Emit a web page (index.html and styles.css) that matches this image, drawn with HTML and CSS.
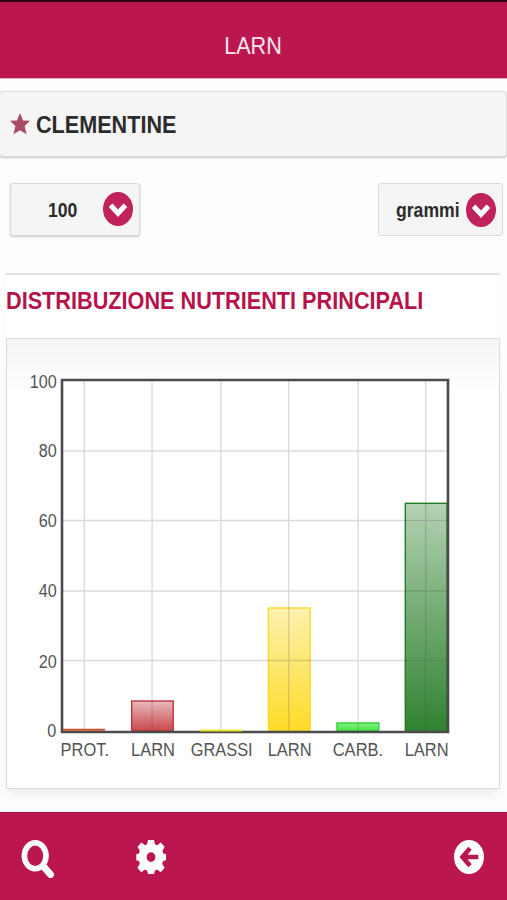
FILE: index.html
```html
<!DOCTYPE html>
<html lang="it">
<head>
<meta charset="utf-8">
<title>LARN</title>
<link rel="stylesheet" href="styles.css">
</head>
<body>
<header class="topbar"><h1 class="cond">LARN</h1></header>
<main>
  <section class="food">
    <svg class="star" viewBox="0 0 20 22"><path d="M10 0l3 7.4 7 .4-5.4 5.3 1.9 8.2L10 17.2l-6.5 4.1 1.9-8.2L0 7.8l7-.4z"/></svg>
    <h2 class="cond">CLEMENTINE</h2>
  </section>
  <div class="controls">
    <button class="select amount"><span class="cond">100</span>
      <svg class="chev" viewBox="0 0 30 34"><ellipse cx="15" cy="17" rx="15" ry="17"/><path d="M7.6 13.3l7.4 8 7.4-8"/></svg>
    </button>
    <button class="select unit"><span class="cond">grammi</span>
      <svg class="chev" viewBox="0 0 30 34"><ellipse cx="15" cy="17" rx="15" ry="17"/><path d="M7.6 13.3l7.4 8 7.4-8"/></svg>
    </button>
  </div>
  <section class="report">
    <h3 class="cond">DISTRIBUZIONE NUTRIENTI PRINCIPALI</h3>
    <div class="panel">
      <svg class="chart" viewBox="7 339 492 449">
        <defs>
          <linearGradient id="red" x2="0" y2="1"><stop stop-color="#e9babd"/><stop offset="1" stop-color="#c9484c"/></linearGradient>
          <linearGradient id="gold" x2="0" y2="1"><stop stop-color="#fdf2b0"/><stop offset="1" stop-color="#ffdb27"/></linearGradient>
          <linearGradient id="lime" x2="0" y2="1"><stop stop-color="#88f088"/><stop offset="1" stop-color="#45e645"/></linearGradient>
          <linearGradient id="green" x2="0" y2="1"><stop stop-color="#b3d2b3"/><stop offset="1" stop-color="#308230"/></linearGradient>
        </defs>
        <rect x="62" y="380" width="386" height="352" fill="#fff"/>
        <rect x="131.7" y="701" width="41.5" height="30" fill="url(#red)" stroke="#c0343c" stroke-width="1.4"/>
        <rect x="268.4" y="608" width="41.8" height="123" fill="url(#gold)" stroke="#fbd929" stroke-width="1.4"/>
        <rect x="337" y="723" width="41.8" height="8" fill="url(#lime)" stroke="#2fce36" stroke-width="1.4"/>
        <rect x="405.3" y="503.3" width="41.8" height="228" fill="url(#green)" stroke="#247b28" stroke-width="1.4"/>
        <path class="grid" d="M84.2 381v349M152.1 381v349M220.9 381v349M288.8 381v349M358.1 381v349M425.7 381v349M63 451h384M63 520.5h384M63 591h384M63 660.5h384"/>
        <path class="frame" d="M62 380h386v352H62z"/>
        <path d="M63 729.8h42" stroke="#c9502c" stroke-width="2"/>
        <path d="M200 730.4h42" stroke="#e9e52d" stroke-width="2"/>
        <g class="tick">
          <text x="29.8" y="387.5" textLength="27" lengthAdjust="spacingAndGlyphs">100</text>
          <text x="38.8" y="457" textLength="18" lengthAdjust="spacingAndGlyphs">80</text>
          <text x="38.8" y="527.3" textLength="18" lengthAdjust="spacingAndGlyphs">60</text>
          <text x="38.8" y="597" textLength="18" lengthAdjust="spacingAndGlyphs">40</text>
          <text x="38.8" y="667.5" textLength="18" lengthAdjust="spacingAndGlyphs">20</text>
          <text x="47.3" y="737.2" textLength="9" lengthAdjust="spacingAndGlyphs">0</text>
          <text x="60.6" y="756.3" textLength="48.5" lengthAdjust="spacingAndGlyphs">PROT.</text>
          <text x="131" y="756.3" textLength="44" lengthAdjust="spacingAndGlyphs">LARN</text>
          <text x="190.7" y="756.3" textLength="62" lengthAdjust="spacingAndGlyphs">GRASSI</text>
          <text x="267.7" y="756.3" textLength="44" lengthAdjust="spacingAndGlyphs">LARN</text>
          <text x="332.7" y="756.3" textLength="50.5" lengthAdjust="spacingAndGlyphs">CARB.</text>
          <text x="404.7" y="756.3" textLength="44" lengthAdjust="spacingAndGlyphs">LARN</text>
        </g>
      </svg>
    </div>
  </section>
</main>
<footer class="toolbar">
  <svg class="search" viewBox="0 0 33 38"><ellipse cx="14.2" cy="15.8" rx="10.8" ry="13"/><path d="M22.5 26.5l7 8"/></svg>
  <svg class="gear" viewBox="0 0 30 34"><path fill-rule="evenodd" d="M12 0h6l.9 4.2 2.1 1 3.8-2.8 3.8 4.4-2.2 4.2.8 2.4 2.8.8v6l-2.9.9-.9 2.6 2.4 4-3.9 4.5-3.6-2.8-2.2 1-.9 3.6h-6l-.9-3.6-2.2-1-3.6 2.8-3.9-4.5 2.4-4-.8-2.6-2.7-.9v-6l2.7-.8.8-2.4-2.2-4.2 3.8-4.4L9 5.2l2.1-1zM15 12.2a4.4 4.9 0 1 0 0 9.8 4.4 4.9 0 1 0 0-9.8z"/></svg>
  <svg class="back" viewBox="0 0 30 34"><ellipse cx="15" cy="17" rx="15" ry="17"/><path d="M24.3 17H9M16 8.2L8.5 17l7.5 8.8"/></svg>
</footer>
</body>
</html>
```
FILE: styles.css
```css
* { box-sizing: border-box; }
body {
  margin: 0;
  height: 900px;
  display: flex;
  flex-direction: column;
  overflow: hidden;
  background: #fdfdfd;
  font-family: "Liberation Sans", Arial, sans-serif;
  color: #2b2b2b;
}
h1, h2, h3 { margin: 0; white-space: nowrap; }
svg { display: block; flex: none; }
.cond { display: inline-block; transform: scaleX(.9); transform-origin: 0 50%; }
.topbar {
  height: 79px;
  padding-top: 12px;
  display: flex;
  align-items: center;
  justify-content: center;
  background: #bb164f;
  border-top: 2px solid #2b0415;
  border-bottom: 1px solid #eda9c1;
}
.topbar h1 {
  font-size: 24px;
  font-weight: 400;
  line-height: 28px;
  color: #fce6ee;
  transform-origin: 50% 50%;
}
main { flex: 1; padding-top: 12px; }
.food {
  height: 66px;
  width: 508px;
  margin-left: -1px;
  padding-left: 10px;
  display: flex;
  align-items: center;
  gap: 6px;
  background: #f5f5f5;
  border: 1px solid #dcdcdc;
  border-radius: 4px;
  box-shadow: 0 1px 2px #c6c6c6;
}
.star { width: 20px; height: 22px; fill: #ac4966; }
.food h2 { font-size: 24px; line-height: 28px; padding-top: 1px; }
.controls {
  display: flex;
  justify-content: space-between;
  padding: 26px 4px 0 10px;
  height: 116px;
}
.select {
  height: 53px;
  display: flex;
  align-items: center;
  justify-content: space-between;
  padding: 0 6px 0 37px;
  background: #f5f5f5;
  border: 1px solid #d9d9d9;
  border-radius: 3px;
  font: bold 20px "Liberation Sans", Arial, sans-serif;
  color: #2b2b2b;
}
.select .cond { padding-top: 2px; transform: scaleX(.88); }
.amount { width: 130px; box-shadow: 0 1px 2px #c8c8c8; }
.amount .chev { margin-top: -2px; }
.unit { width: 125px; padding-left: 17px; }
.unit .cond { width: 0; }
.chev { width: 30px; height: 34px; fill: #c0235b; }
.chev path { fill: none; stroke: #fff; stroke-width: 5; }
.report {
  margin: 0 7px 0 6px;
  padding-top: 11px;
  background: #fff;
  border-top: 2px solid #e2e2e2;
}
.report h3 { font-size: 23.5px; line-height: 30px; color: #b51349; transform: scaleX(.922); }
.panel {
  width: 494px;
  height: 451px;
  margin-top: 22px;
  background: linear-gradient(#f5f5f5, #fff 55px);
  border: 1px solid #dadada;
  box-shadow: 0 8px 10px -4px rgba(0, 0, 0, .09);
}
.chart { width: 492px; height: 449px; }
.grid { fill: none; stroke: #444; stroke-opacity: .2; stroke-width: 1.4; }
.frame { fill: none; stroke: #4b4b4b; stroke-width: 2.6; }
.tick { font-size: 17.5px; fill: #545454; }
.toolbar {
  height: 88px;
  display: flex;
  padding: 27px 23px 0 21px;
  background: #bb164f;
  border-top: 1px solid #a01342;
}
.search { width: 33px; height: 38px; fill: none; stroke: #fff; stroke-width: 5.6; stroke-linecap: round; }
.search path { stroke-width: 7; }
.gear { width: 30px; height: 34px; margin-left: 82px; fill: #fff; }
.back { width: 30px; height: 34px; margin-left: auto; fill: #fff; }
.back path { fill: none; stroke: #bb164f; stroke-width: 4.6; }
```
